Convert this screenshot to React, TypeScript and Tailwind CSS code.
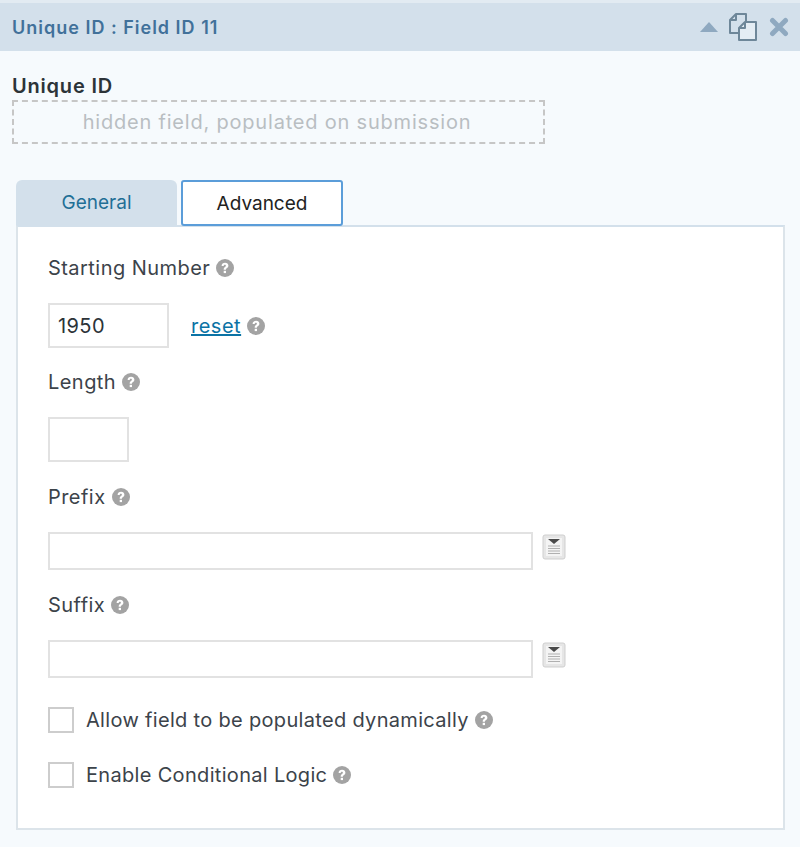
const font = { fontFamily: 'Inter, "Liberation Sans", sans-serif' };

function Help({ className = "" }: { className?: string }) {
  return (
    <svg viewBox="0 0 18 18" className={`w-[18px] h-[18px] shrink-0 ${className}`}>
      <circle cx="9" cy="9" r="9" fill="#a3a3a3" />
      <path d="M5.6 7c0-2 1.5-3.2 3.5-3.2 1.9 0 3.3 1.2 3.3 2.9 0 1.3-.8 1.9-1.6 2.5-.6.4-.9.7-.9 1.3v.3H7.7V10.300c0-1.100.5-1.700 1.200-2.200.6-.5 1-.7 1-1.300 0-.6-.4-1-1-1-.7 0-1.200.5-1.200 1.200z" fill="#fff" />
      <rect x="7.700" y="11.800" width="2.300" height="2.300" fill="#fff" />
    </svg>
  );
}

function Merge() {
  return (
    <svg viewBox="0 0 24 26" className="w-6 h-[26px] shrink-0">
      <rect x="1" y="1" width="22" height="24" rx="2" fill="#e6e6e6" stroke="#cfcfcf" />
      <rect x="4" y="4" width="16" height="18" fill="#f4f4f4" />
      <path d="M6 5h12l-6 5z" fill="#4a4a4a" />
      <path d="M6 12h12M6 14.500h12M6 17h12M6 19.500h12" stroke="#b0b0b0" strokeWidth="1" />
    </svg>
  );
}

function Label({ children }: { children: React.ReactNode }) {
  return (
    <div className="flex items-center gap-[6px] h-6 text-[20px] leading-6 tracking-[0.45px] text-[#3c434a]">
      <span>{children}</span>
      <Help />
    </div>
  );
}

function Check({ label }: { label: string }) {
  return (
    <div className="flex items-center h-[26px]">
      <div className="w-[26px] h-[26px] border-2 border-[#cdcdcd] bg-white shrink-0" />
      <span className="ml-3 text-[20px] leading-6 tracking-[0.32px] text-[#3c434a]">{label}</span>
      <Help className="ml-[6px]" />
    </div>
  );
}

function Input({ width, height }: { width: string; height: string }) {
  return <div className={`border-2 border-[#e2e2e2] bg-white ${width} ${height}`} />;
}

export default function App() {
  return (
    <div style={font} className="w-[800px] h-[847px] bg-[#f6fafd] overflow-hidden">
      <header className="h-[51px] bg-[#d3e0eb] border-t-[3px] border-[#e2ebf2] flex items-center justify-between pl-3 pr-[11px]">
        <span className="text-[18px] font-semibold tracking-[1px] text-[#41719a]">Unique ID : Field ID 11</span>
        <div className="flex items-center">
          <svg viewBox="0 0 18 10" className="w-[18px] h-[10px]"><path d="M9 0l9 10H0z" fill="#8fa9c0" /></svg>
          <svg viewBox="0 0 30 28" className="w-[30px] h-[28px] ml-[10px]" fill="none" stroke="#6e8799" strokeWidth="2" strokeLinejoin="round">
            <path d="M10 20H2V7l6-6h10v8" fill="#d3e0eb" />
            <path d="M2 7h6V1" />
            <path d="M11 15l6-6h11v18H11z" fill="#e4edf4" />
            <path d="M11 15h6V9" />
          </svg>
          <svg viewBox="0 0 20 20" className="w-5 h-5 ml-[11px]"><path d="M3.500 3.500l13 13M16.500 3.500l-13 13" stroke="#8fa9c0" strokeWidth="5" strokeLinecap="round" /></svg>
        </div>
      </header>

      <div className="pl-3 pt-[23px] text-[20px] leading-6 font-semibold tracking-[0.8px] text-[#2c3338]">Unique ID</div>
      <div className="ml-3 mt-[2px] w-[533px] h-[44px] border-2 border-dashed border-[#c6c6c6] flex items-center justify-center text-[20px] tracking-[0.8px] text-[#b9bec2]">
        <span className="-ml-[3px]">hidden field, populated on submission</span>
      </div>

      <div className="ml-4 mt-9 w-[769px]">
        <div className="flex items-end h-[46px] -mb-px relative">
          <div className="w-[161px] h-[45px] mb-px pt-[2px] bg-[#d3e0eb] rounded-t-[6px] flex items-center justify-center text-[19px] text-[#1f6f96]">General</div>
          <div className="ml-1 w-[162px] h-[46px] pt-[2px] bg-white border-2 border-[#5b9dd9] rounded-[3px] flex items-center justify-center text-[19px] text-[#222]">Advanced</div>
        </div>
        <div className="h-[605px] bg-white border-2 border-[#dce4ea] border-t-[#d3e0eb] pl-[30px] pt-[29px]">
          <Label>Starting Number</Label>
          <div className="flex items-center mt-[23px]">
            <div className="w-[121px] h-[45px] border-2 border-[#e2e2e2] flex items-center pl-[8px] text-[20px] tracking-[0.4px] text-[#2c3338]">1950</div>
            <a className="ml-[22px] text-[20px] tracking-[0.5px] underline text-[#0b73a5]">reset</a>
            <Help className="ml-[6px]" />
          </div>
          <div className="mt-[22px]"><Label>Length</Label></div>
          <div className="mt-[23px]"><Input width="w-[81px]" height="h-[45px]" /></div>
          <div className="mt-[23px]"><Label>Prefix</Label></div>
          <div className="mt-[23px] flex items-center">
            <Input width="w-[485px]" height="h-[38px]" />
            <div className="ml-[9px] -mt-[8px]"><Merge /></div>
          </div>
          <div className="mt-[23px]"><Label>Suffix</Label></div>
          <div className="mt-[23px] flex items-center">
            <Input width="w-[485px]" height="h-[38px]" />
            <div className="ml-[9px] -mt-[8px]"><Merge /></div>
          </div>
          <div className="mt-[29px]"><Check label="Allow field to be populated dynamically" /></div>
          <div className="mt-[29px]"><Check label="Enable Conditional Logic" /></div>
        </div>
      </div>
    </div>
  );
}
